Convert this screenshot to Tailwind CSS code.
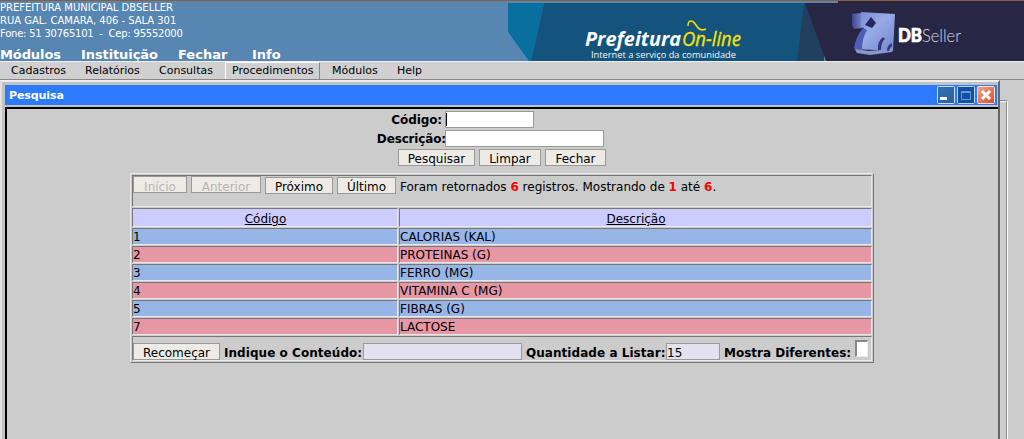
<!DOCTYPE html>
<html lang="pt-BR">
<head>
<meta charset="utf-8">
<title>Prefeitura On-line</title>
<script src="https://cdn.jsdelivr.net/npm/@tailwindcss/browser@4"></script>
</head>
<body class="h-[439px] overflow-hidden bg-[#cccccc] font-['DejaVu_Sans',sans-serif] text-xs text-black">
<header class="flex h-[61px] border-t border-[#8a5d3c] bg-[#5786b2] text-white">
  <div class="flex w-[508px] shrink-0 flex-col">
    <div class="h-[45px] text-[10px] leading-[13px] whitespace-pre"><p>PREFEITURA MUNICIPAL DBSELLER</p><p class="tracking-[-0.03px]">RUA GAL. CAMARA, 406 - SALA 301</p><p class="tracking-[-0.23px]">Fone: 51 30765101  -  Cep: 95552000</p></div>
    <nav class="flex h-[15px] text-[13px] leading-[17px] font-bold"><span class="w-[81px] tracking-[-0.1px]">Módulos</span><span class="w-[97px] tracking-[-0.1px]">Instituição</span><span class="w-[74px]">Fechar</span><span>Info</span></nav>
  </div>
  <svg width="516" height="60" viewBox="508 1 516 60" class="shrink-0">
    <defs>
      <linearGradient id="cube" x1="0" y1="0" x2="1" y2="1"><stop stop-color="#6f85cf"/><stop offset=".45" stop-color="#98abe4"/><stop offset="1" stop-color="#6f86d0"/></linearGradient>
      <linearGradient id="side" x1="0" y1="0" x2="1" y2="0"><stop stop-color="#3f4690"/><stop offset="1" stop-color="#7587cc"/></linearGradient>
    </defs>
    <path d="M508 3h36l-13 58h-2l-21-29z" fill="#086f9f"/>
    <path d="M544 3h261l-7 58H531z" fill="#14547c"/>
    <path d="M804 3h20v58h-27z" fill="#21405f"/>
    <path d="M805 3h33V1h186v60H826z" fill="#272745"/>
    <text x="585" y="46" textLength="96" lengthAdjust="spacingAndGlyphs" font-family="Open Sans" font-size="20" font-weight="700" font-style="italic" fill="#fff">Prefeitura</text>
    <text x="682" y="46" textLength="59" lengthAdjust="spacingAndGlyphs" font-family="Open Sans" font-size="20" font-style="italic" fill="#f4e307" stroke="#f4e307" stroke-width=".3">On-line</text>
    <path d="M688 26c0-7 5-6 8-1s6 6 10 4" fill="none" stroke="#f4d907" stroke-width="1.5"/>
    <text x="591" y="57.500" textLength="145" lengthAdjust="spacingAndGlyphs" font-family="Open Sans" font-size="9.500" fill="#f2f8fb">Internet a serviço da comunidade</text>
    <path d="M852 14l9-1 1 15-8 1-2-4z" fill="url(#side)"/>
    <path d="M861 12l34 2-2 37-38-2 9-21-3-1z" fill="url(#cube)"/>
    <path d="M863 28q-7 8-9 20l3 5 5-3q0-12 5-20z" fill="#4b60b4"/>
    <path d="M855 49l14 2 24-2-1 3-22 3-13-2z" fill="#8997d0"/>
    <path d="M871 17l5 6-4 5-7-3z" fill="#292568"/>
    <path d="M878 50q-1-8 5-13l2 2q-4 3-4 11M887 51q0-6 5-8v3q-3 2-3 5" fill="#343679"/>
    <text x="898" y="42" textLength="24" lengthAdjust="spacingAndGlyphs" font-family="Lato" font-size="18" font-weight="900" fill="#fff" stroke="#fff" stroke-width=".7">DB</text>
    <text x="922" y="42" textLength="39" lengthAdjust="spacingAndGlyphs" font-family="Lato" font-size="17.500" font-weight="300" fill="#d7d7e2">Seller</text>
  </svg>
</header>
<nav class="flex h-[19px] border-t border-b border-t-[#eeeeee] border-b-[#888888] bg-[#d0d0d0] text-[11px] leading-[17px]">
  <span class="w-[74px] pl-[11px]">Cadastros</span><span class="w-[74px] pl-[11px]">Relatórios</span><span class="w-[77px] pl-[11px]">Consultas</span><span class="w-[95px] border-t border-r border-l border-t-white border-r-[#888888] border-l-white pl-[6px] leading-[15px]">Procedimentos</span><span class="w-[65px] pl-[12px]">Módulos</span><span class="pl-[12px]">Help</span>
</nav>
<div class="flex h-[359px]">
  <main class="w-[1000px] shrink-0 border-t-2 border-r-2 border-l-2 border-t-[#eeeeee] border-r-[#666666] border-l-[#e0e0e0] bg-[#c2c2c2] pt-[3px] pr-px pl-[3px]">
    <div class="flex h-[20px] items-center bg-[#2c7bff] pr-px pl-[4px] text-[11px] font-bold text-white">
      <h1 class="flex-1 pt-[2px] tracking-[-0.1px]">Pesquisa</h1>
      <svg width="60" height="20" viewBox="0 0 60 20">
        <defs><linearGradient id="mn" x1="0" y1="0" x2="1" y2="1"><stop stop-color="#3371b5"/><stop offset="1" stop-color="#2b5fa0"/></linearGradient><linearGradient id="cl" x1="0" y1="0" x2="1" y2="1"><stop stop-color="#f1a58b"/><stop offset="1" stop-color="#cf5030"/></linearGradient></defs>
        <rect x="1.500" y="1.500" width="17" height="17" rx="1" fill="url(#mn)" stroke="#c4ddf5"/><path d="M4 12h7v3H4z" fill="#fff"/>
        <rect x="21.500" y="1.500" width="17" height="17" rx="1" fill="#174f9d" stroke="#b4d3f3"/><path d="M25.500 6.500h9v8h-9zM25 7.500h10" fill="none" stroke="#5b9ae8"/>
        <rect x="41.500" y="1.500" width="17" height="17" rx="1" fill="url(#cl)" stroke="#ffe0d5"/><path d="M46 6l8 8m0-8l-8 8" stroke="#fff" stroke-width="3"/>
      </svg>
    </div>
    <section class="-mr-px mt-[2px] h-[340px] border-t-2 border-l-2 border-black bg-[#cccccc] pt-[2px]">
      <form class="flex flex-col gap-px">
        <label class="flex h-[18px]"><b class="w-[438px] pt-px pr-[3px] text-right tracking-[-0.1px]">Código:</b><span class="flex h-[17px] w-[89px] items-center border border-[#999999] bg-white"><i class="h-[13px] w-px bg-black"></i></span></label>
        <label class="flex h-[18px]"><b class="-mr-px w-[439px] pt-px text-right tracking-[-0.15px]">Descrição:</b><span class="h-[17px] w-[159px] border border-[#999999] bg-white"></span></label>
        <div class="flex h-[18px] gap-[4px] pl-[391px] text-center leading-[18px]"><span class="h-[17px] w-[77px] border border-[#999999] bg-[#eeebe7]">Pesquisar</span><span class="h-[17px] w-[62px] border border-[#999999] bg-[#eeebe7]">Limpar</span><span class="h-[17px] w-[61px] border border-[#999999] bg-[#eeebe7]">Fechar</span></div>
      </form>
      <div class="mt-[6px] ml-[123px] grid w-[744px] grid-cols-[266px_473px] gap-px border border-t-[#e8e8e8] border-r-[#777777] border-b-[#777777] border-l-[#e8e8e8] p-px leading-[16px] *:border *:border-t-[#777777] *:border-r-[#e8e8e8] *:border-b-[#e8e8e8] *:border-l-[#777777]">
        <div class="col-span-2 flex h-[32px] gap-[4px] leading-[18px]">
          <span class="h-[17px] w-[54px] border border-[#999999] bg-[#eeebe7] text-center leading-[20px] text-[#b8b5b1]">Início</span><span class="h-[17px] w-[70px] border border-[#999999] bg-[#eeebe7] text-center leading-[20px] text-[#b8b5b1]">Anterior</span><span class="mt-px h-[17px] w-[68px] border border-[#999999] bg-[#eeebe7] text-center">Próximo</span><span class="mt-px h-[17px] w-[59px] border border-[#999999] bg-[#eeebe7] text-center">Último</span><p class="mt-px pt-px">Foram retornados <b class="text-[#ff0000]">6</b> registros. Mostrando de <b class="text-[#ff0000]">1</b> até <b class="text-[#ff0000]">6</b>.</p>
        </div>
        <div class="h-[19px] bg-[#ccccff] pl-px text-center leading-[20px] underline">Código</div><div class="h-[19px] bg-[#ccccff] pl-px text-center leading-[20px] underline">Descrição</div>
        <div class="h-[17px] bg-[#97b5e6]">1</div><div class="h-[17px] bg-[#97b5e6]">CALORIAS (KAL)</div>
        <div class="h-[17px] bg-[#e796a4]">2</div><div class="h-[17px] bg-[#e796a4]">PROTEINAS (G)</div>
        <div class="h-[17px] bg-[#97b5e6]">3</div><div class="h-[17px] bg-[#97b5e6]">FERRO (MG)</div>
        <div class="h-[17px] bg-[#e796a4]">4</div><div class="h-[17px] bg-[#e796a4]">VITAMINA C (MG)</div>
        <div class="h-[17px] bg-[#97b5e6]">5</div><div class="h-[17px] bg-[#97b5e6]">FIBRAS (G)</div>
        <div class="h-[17px] bg-[#e796a4]">7</div><div class="h-[17px] bg-[#e796a4]">LACTOSE</div>
        <div class="col-span-2 flex h-[25px] pt-[6px] leading-[18px] whitespace-nowrap">
          <span class="h-[17px] w-[87px] shrink-0 border border-[#999999] bg-[#eeebe7] text-center">Recomeçar</span><b class="w-[143px] shrink-0 pt-px pl-[4px] tracking-[0.05px]">Indique o Conteúdo:</b><span class="h-[17px] w-[159px] shrink-0 border border-[#999999] bg-[#e3e1ef]"></span><b class="w-[144px] shrink-0 pt-px pl-[4px] tracking-[0.05px]">Quantidade a Listar:</b><span class="h-[17px] w-[54px] shrink-0 border border-[#999999] bg-[#e3e1ef]">15</span><b class="w-[135px] shrink-0 pt-px pl-[4px]">Mostra Diferentes:</b><span class="-mt-[3px] h-[17px] w-[13px] shrink-0 border-t-2 border-r border-b border-l-2 border-t-[#888888] border-r-[#eeeeee] border-b-[#eeeeee] border-l-[#888888] bg-white"></span>
        </div>
      </div>
    </section>
  </main>
  <aside class="mt-[20px] w-[8px] border-t border-r border-t-[#888888] border-r-white"><div class="h-full border-t border-r border-t-white border-r-[#888888]"></div></aside>
</div>
</body>
</html>
